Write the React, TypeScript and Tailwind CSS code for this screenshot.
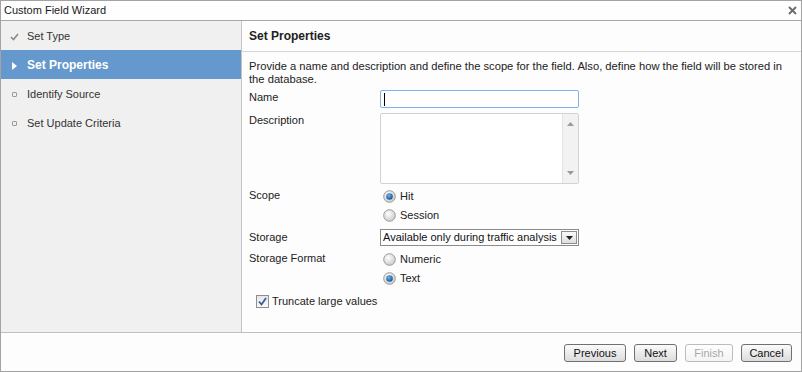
import React from "react";

const font = { fontFamily: '"Liberation Sans", Arial, sans-serif' };

function Radio({ checked }: { checked: boolean }) {
  return (
    <svg width="13" height="13" viewBox="0 0 13 13" className="shrink-0">
      <defs>
        <radialGradient id="rg" cx="0.4" cy="0.35" r="0.7">
          <stop offset="0" stopColor="#ffffff" />
          <stop offset="1" stopColor="#c8c8c8" />
        </radialGradient>
        <radialGradient id="rb" cx="0.4" cy="0.35" r="0.7">
          <stop offset="0" stopColor="#6fb3ea" />
          <stop offset="1" stopColor="#0d4f8f" />
        </radialGradient>
      </defs>
      <circle cx="6.5" cy="6.5" r="5.8" fill="url(#rg)" stroke="#9a9a9a" strokeWidth="1" />
      {checked && <circle cx="6.5" cy="6.5" r="3.3" fill="url(#rb)" />}
    </svg>
  );
}

function RadioRow({ checked, label }: { checked: boolean; label: string }) {
  return (
    <div className="flex h-[19px] items-center gap-[4px] pl-[3px]">
      <Radio checked={checked} />
      <span>{label}</span>
    </div>
  );
}

function Btn({ children, disabled }: { children: React.ReactNode; disabled?: boolean }) {
  return (
    <div
      className={
        "flex h-[18px] items-center justify-center rounded-[3px] border bg-gradient-to-b " +
        (disabled
          ? "border-[#bcbcbc] from-[#fefefe] to-[#f4f4f4] text-[#a8a8a8]"
          : "border-[#707070] from-[#fbfbfb] to-[#dcdcdc] text-[#111]")
      }
    >
      {children}
    </div>
  );
}

export default function App() {
  return (
    <div
      className="flex h-[372px] w-[802px] flex-col border border-[#a3a3a3] bg-[#fdfdfd] text-[11px] leading-[13px] text-[#222]"
      style={font}
    >
      {/* Title */}
      <div className="flex h-[20px] shrink-0 items-center justify-between border-b border-[#a8a8a8] bg-[#fefefe] pl-[3px] pr-[4px]">
        <span className="text-[11px] text-[#1a1a1a]">Custom Field Wizard</span>
        <svg width="9" height="9" viewBox="0 0 9 9">
          <path d="M1 1 L8 8 M8 1 L1 8" stroke="#6a6a6a" strokeWidth="1.8" />
        </svg>
      </div>

      {/* Main */}
      <div className="flex h-[311px] shrink-0">
        {/* Sidebar */}
        <div className="w-[241px] shrink-0 border-r border-[#c4c4c4] bg-[#f0f0f0] text-[#333]">
          <div className="flex h-[29px] items-center pt-[2px]">
            <div className="flex w-[26px] justify-center pl-[1px]">
              <svg width="9" height="8" viewBox="0 0 9 8">
                <path d="M1 4 L3.5 6.5 L8 1" fill="none" stroke="#8a8a8a" strokeWidth="1.6" />
              </svg>
            </div>
            <span>Set Type</span>
          </div>
          <div className="flex h-[29px] items-center bg-[#6598cc] pt-[2px] text-white">
            <div className="flex w-[26px] justify-center">
              <svg width="5" height="8" viewBox="0 0 5 8">
                <path d="M0 0 L5 4 L0 8 Z" fill="#ffffff" />
              </svg>
            </div>
            <span className="text-[12px] font-bold">Set Properties</span>
          </div>
          <div className="flex h-[29px] items-center pt-[2px]">
            <div className="flex w-[26px] justify-center">
              <div className="h-[5px] w-[5px] rounded-[1px] border border-[#9a9a9a]" />
            </div>
            <span>Identify Source</span>
          </div>
          <div className="flex h-[29px] items-center pt-[2px]">
            <div className="flex w-[26px] justify-center">
              <div className="h-[5px] w-[5px] rounded-[1px] border border-[#9a9a9a]" />
            </div>
            <span>Set Update Criteria</span>
          </div>
        </div>

        {/* Content */}
        <div className="flex min-w-0 flex-1 flex-col">
          <div className="flex h-[31px] shrink-0 items-center border-b border-[#d6d6d6] pl-[7px] pt-[1px]">
            <span className="text-[12px] font-bold text-[#222]">Set Properties</span>
          </div>
          <div className="flex flex-col pl-[7px] pr-[10px] pt-[8px]">
            <p className="w-[545px] text-[11.2px]">
              Provide a name and description and define the scope for the field. Also, define how the field will be stored in
              the database.
            </p>

            <div className="mt-[4px] flex">
              <div className="w-[131px] pt-[1px]">Name</div>
              <div className="flex h-[18px] w-[199px] items-center rounded-[2px] border border-[#7eb4ea] bg-white pl-[3px]">
                <div className="h-[13px] w-[1px] bg-black" />
              </div>
            </div>

            <div className="mt-[5px] flex">
              <div className="w-[131px] pt-[1px]">Description</div>
              <div className="flex h-[71px] w-[199px] rounded-[2px] border border-[#d2d2d2] bg-white">
                <div className="flex-1" />
                <div className="flex w-[16px] flex-col items-center justify-between border-l border-[#e4e4e4] bg-[#f2f2f2] py-[8px]">
                  <svg width="7" height="4" viewBox="0 0 7 4">
                    <path d="M0 4 L3.5 0 L7 4 Z" fill="#9a9a9a" />
                  </svg>
                  <svg width="7" height="4" viewBox="0 0 7 4">
                    <path d="M0 0 L3.5 4 L7 0 Z" fill="#9a9a9a" />
                  </svg>
                </div>
              </div>
            </div>

            <div className="mt-[3px] flex">
              <div className="w-[131px] pt-[2px]">Scope</div>
              <div className="flex flex-col">
                <RadioRow checked label="Hit" />
                <RadioRow checked={false} label="Session" />
              </div>
            </div>

            <div className="mt-[4px] flex items-center">
              <div className="w-[131px]">Storage</div>
              <div className="flex h-[17px] w-[199px] items-center justify-between border border-[#8a8a8a] bg-white pl-[2px] pr-[1px]">
                <span className="text-[#111]">Available only during traffic analysis</span>
                <div className="flex h-[13px] w-[16px] items-center justify-center border border-[#8c8c8c] bg-gradient-to-b from-[#fafafa] to-[#dedede]">
                  <svg width="7" height="4" viewBox="0 0 7 4">
                    <path d="M0 0 L3.5 4 L7 0 Z" fill="#222" />
                  </svg>
                </div>
              </div>
            </div>

            <div className="mt-[4px] flex">
              <div className="w-[131px] pt-[2px]">Storage Format</div>
              <div className="flex flex-col">
                <RadioRow checked={false} label="Numeric" />
                <RadioRow checked label="Text" />
              </div>
            </div>

            <div className="mt-[4px] flex h-[19px] items-center gap-[3px] pl-[7px]">
              <div className="flex h-[13px] w-[13px] items-center justify-center border border-[#8e8e8e] bg-gradient-to-b from-[#e6e6e6] to-[#fafafa]">
                <svg width="9" height="9" viewBox="0 0 9 9">
                  <path d="M1 4.5 L3.5 7.5 L8 1" fill="none" stroke="#3b5f9a" strokeWidth="1.8" />
                </svg>
              </div>
              <span>Truncate large values</span>
            </div>
          </div>
        </div>
      </div>

      {/* Footer */}
      <div className="flex flex-1 items-start justify-end border-t border-[#c0c0c0] pr-[9px] pt-[11px]">
        <div className="flex gap-[8px]">
          <div className="w-[62px]"><Btn>Previous</Btn></div>
          <div className="w-[43px]"><Btn>Next</Btn></div>
          <div className="w-[48px]"><Btn disabled>Finish</Btn></div>
          <div className="w-[51px]"><Btn>Cancel</Btn></div>
        </div>
      </div>
    </div>
  );
}
